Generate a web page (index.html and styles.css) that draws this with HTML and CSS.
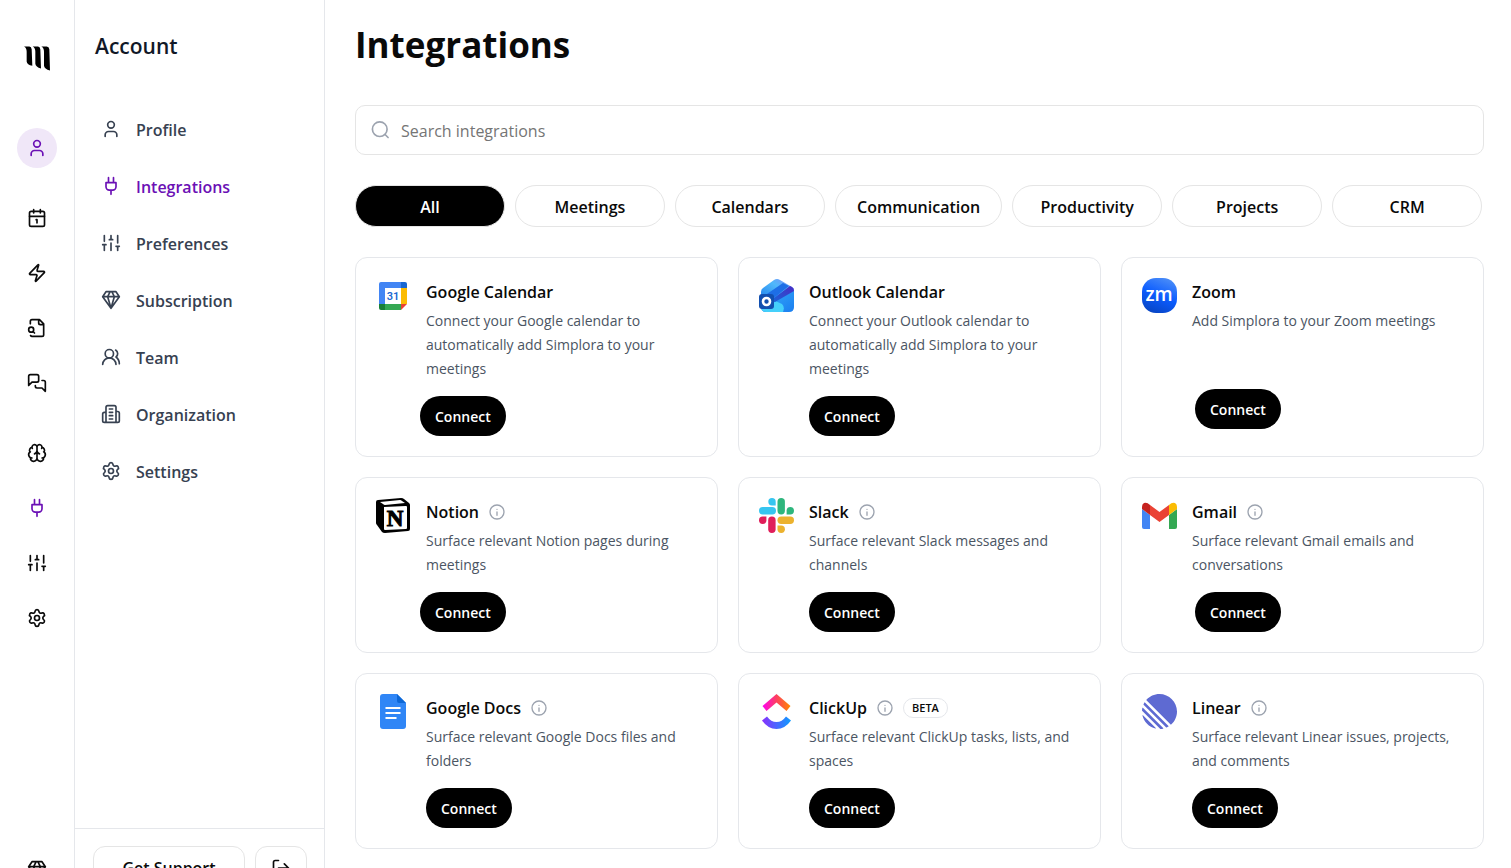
FILE: index.html
```html
<!DOCTYPE html>
<html lang="en">
<head>
<meta charset="utf-8">
<meta name="viewport" content="width=device-width, initial-scale=1">
<title>Integrations</title>
<link rel="stylesheet" href="styles.css">
</head>
<body>
<svg class="sprite" aria-hidden="true">
  <symbol id="i-user" viewBox="0 0 24 24"><path d="M19 21v-2a4 4 0 0 0-4-4H9a4 4 0 0 0-4 4v2"/><circle cx="12" cy="7" r="4"/></symbol>
  <symbol id="i-calendar" viewBox="0 0 24 24"><path d="M11 14h1v4M16 2v4M3 10h18M8 2v4"/><rect x="3" y="4" width="18" height="18" rx="2"/></symbol>
  <symbol id="i-zap" viewBox="0 0 24 24"><path d="M4 14a1 1 0 0 1-.78-1.63l9.9-10.2a.5.5 0 0 1 .86.46l-1.92 6.02A1 1 0 0 0 13 10h7a1 1 0 0 1 .78 1.63l-9.9 10.2a.5.5 0 0 1-.86-.46l1.92-6.02A1 1 0 0 0 11 14z"/></symbol>
  <symbol id="i-file" viewBox="0 0 24 24"><path d="M14 2v4a2 2 0 0 0 2 2h4M4.268 21a2 2 0 0 0 1.727 1H18a2 2 0 0 0 2-2V7l-5-5H6a2 2 0 0 0-2 2v3M9 18l-1.500-1.500"/><circle cx="5" cy="14" r="3"/></symbol>
  <symbol id="i-chat" viewBox="0 0 24 24"><path d="M14 9a2 2 0 0 1-2 2H6l-4 4V4a2 2 0 0 1 2-2h8a2 2 0 0 1 2 2zM18 9h2a2 2 0 0 1 2 2v11l-4-4h-6a2 2 0 0 1-2-2v-1"/></symbol>
  <symbol id="i-brain" viewBox="0 0 24 24"><path d="M12 18V5M15 13a4.170 4.170 0 0 1-3-4 4.170 4.170 0 0 1-3 4M17.598 6.500A3 3 0 1 0 12 5a3 3 0 1 0-5.598 1.500M17.997 5.125a4 4 0 0 1 2.526 5.770M18 18a4 4 0 0 0 2-7.464M19.967 17.483A4 4 0 1 1 12 18a4 4 0 1 1-7.967-.517M6 18a4 4 0 0 1-2-7.464M6.003 5.125a4 4 0 0 0-2.526 5.770"/></symbol>
  <symbol id="i-plug" viewBox="0 0 24 24"><path d="M12 22v-5M9 8V2M15 8V2M18 8v5a4 4 0 0 1-4 4h-4a4 4 0 0 1-4-4V8Z"/></symbol>
  <symbol id="i-sliders" viewBox="0 0 24 24"><path d="M4 21v-7M4 10V3M12 21v-9M12 8V3M20 21v-5M20 12V3M2 14h4M10 8h4M18 16h4"/></symbol>
  <symbol id="i-gear" viewBox="0 0 24 24"><path d="M9.671 4.136a2.340 2.340 0 0 1 4.659 0 2.340 2.340 0 0 0 3.319 1.915 2.340 2.340 0 0 1 2.330 4.033 2.340 2.340 0 0 0 0 3.831 2.340 2.340 0 0 1-2.330 4.033 2.340 2.340 0 0 0-3.319 1.915 2.340 2.340 0 0 1-4.659 0 2.340 2.340 0 0 0-3.320-1.915 2.340 2.340 0 0 1-2.330-4.033 2.340 2.340 0 0 0 0-3.831A2.340 2.340 0 0 1 6.350 6.051a2.340 2.340 0 0 0 3.319-1.915"/><circle cx="12" cy="12" r="3"/></symbol>
  <symbol id="i-gem" viewBox="0 0 24 24"><path d="M6 2h12l4 6-10 14L2 8ZM11 2 8 8l4 14 4-14-3-6M2 8h20"/></symbol>
  <symbol id="i-team" viewBox="0 0 24 24"><path d="M18 21a8 8 0 0 0-16 0M22 20c0-3.370-2-6.500-4-8a5 5 0 0 0-.450-8.300"/><circle cx="10" cy="8" r="5"/></symbol>
  <symbol id="i-building" viewBox="0 0 24 24"><path d="M6 22V4a2 2 0 0 1 2-2h8a2 2 0 0 1 2 2v18ZM6 10H4a2 2 0 0 0-2 2v8a2 2 0 0 0 2 2h2M18 9h2a2 2 0 0 1 2 2v9a2 2 0 0 1-2 2h-2M10 6h4M10 10h4M10 14h4M10 18h4"/></symbol>
  <symbol id="i-logout" viewBox="0 0 24 24"><path d="m16 17 5-5-5-5M21 12H9M9 21H5a2 2 0 0 1-2-2V5a2 2 0 0 1 2-2h4"/></symbol>
  <symbol id="i-search" viewBox="0 0 24 24"><circle cx="10.500" cy="11" r="8.800"/><path d="m20.500 21-3.600-3.600"/></symbol>
  <symbol id="i-info" viewBox="0 0 24 24"><circle cx="12" cy="12" r="10.500"/><path d="M12 17v-5M12 8v.010"/></symbol>
</svg>

<div class="shell">
  <nav class="rail" aria-label="Main">
    <a class="logo" href="#" aria-label="Home">
      <svg viewBox="0 0 78 74" width="26" height="25"><path d="M0 1H16Q22 2 23 9L25 59Q9 56 8 46V17Q8 5 0 1ZM26 1H42Q48 2 49 9L51 67Q35 63 34 53V17Q34 5 26 1ZM52 1H68Q75 2 76 9L78 73Q61 69 60 59V17Q60 5 52 1Z"/></svg>
    </a>
    <a class="rail-link rail-link--current" href="#" aria-label="Account"><svg class="icon"><use href="#i-user"/></svg></a>
    <div class="rail-group">
      <a class="rail-link" href="#" aria-label="Calendar"><svg class="icon"><use href="#i-calendar"/></svg></a>
      <a class="rail-link" href="#" aria-label="Automations"><svg class="icon"><use href="#i-zap"/></svg></a>
      <a class="rail-link" href="#" aria-label="Files"><svg class="icon"><use href="#i-file"/></svg></a>
      <a class="rail-link" href="#" aria-label="Chats"><svg class="icon"><use href="#i-chat"/></svg></a>
    </div>
    <div class="rail-group">
      <a class="rail-link" href="#" aria-label="Memory"><svg class="icon"><use href="#i-brain"/></svg></a>
      <a class="rail-link rail-link--accent" href="#" aria-label="Integrations"><svg class="icon"><use href="#i-plug"/></svg></a>
      <a class="rail-link" href="#" aria-label="Preferences"><svg class="icon"><use href="#i-sliders"/></svg></a>
      <a class="rail-link" href="#" aria-label="Settings"><svg class="icon"><use href="#i-gear"/></svg></a>
    </div>
    <a class="rail-link rail-link--last" href="#" aria-label="Upgrade"><svg class="icon"><use href="#i-gem"/></svg></a>
  </nav>

  <aside class="panel">
    <h2 class="panel-title">Account</h2>
    <nav class="menu" aria-label="Account">
      <a class="menu-link" href="#"><svg class="icon"><use href="#i-user"/></svg><span>Profile</span></a>
      <a class="menu-link menu-link--current" href="#" aria-current="page"><svg class="icon"><use href="#i-plug"/></svg><span>Integrations</span></a>
      <a class="menu-link" href="#"><svg class="icon"><use href="#i-sliders"/></svg><span>Preferences</span></a>
      <a class="menu-link" href="#"><svg class="icon"><use href="#i-gem"/></svg><span>Subscription</span></a>
      <a class="menu-link" href="#"><svg class="icon"><use href="#i-team"/></svg><span>Team</span></a>
      <a class="menu-link" href="#"><svg class="icon"><use href="#i-building"/></svg><span>Organization</span></a>
      <a class="menu-link" href="#"><svg class="icon"><use href="#i-gear"/></svg><span>Settings</span></a>
    </nav>
    <div class="panel-footer">
      <button class="support" type="button">Get Support</button>
      <button class="logout" type="button" aria-label="Log out"><svg class="icon"><use href="#i-logout"/></svg></button>
    </div>
  </aside>

  <main class="main">
    <h1 class="title">Integrations</h1>
    <label class="search">
      <svg class="icon" aria-hidden="true"><use href="#i-search"/></svg>
      <input class="search-input" type="search" placeholder="Search integrations" aria-label="Search integrations">
    </label>
    <div class="filters">
      <button class="filter filter--on" type="button">All</button>
      <button class="filter" type="button">Meetings</button>
      <button class="filter" type="button">Calendars</button>
      <button class="filter" type="button">Communication</button>
      <button class="filter" type="button">Productivity</button>
      <button class="filter" type="button">Projects</button>
      <button class="filter" type="button">CRM</button>
    </div>

    <div class="cards">
      <article class="card">
        <svg class="brand" viewBox="0 0 35 35">
          <path fill="#4285f4" d="M5 4h20v6H9v16H3V6q0-2 2-2Z"/><path fill="#1967d2" d="M25 4h4q2 0 2 2v4h-6Z"/><path fill="#fbbc04" d="M25 10h6v16h-6Z"/><path fill="#34a853" d="M9 26h16v6H9Z"/><path fill="#188038" d="M3 26h6v6H5q-2 0-2-2Z"/><path fill="#ea4335" d="M25 26h6l-6 6Z"/><path fill="#fff" d="M9 10h16v16H9Z"/>
          <text class="mark-31" x="17" y="22">31</text>
        </svg>
        <div class="card-body">
          <div class="card-head"><h3 class="card-title">Google Calendar</h3></div>
          <p class="card-text">Connect your Google calendar to automatically add Simplora to your meetings</p>
          <button class="connect connect--outset" type="button">Connect</button>
        </div>
      </article>

      <article class="card">
        <svg class="brand" viewBox="0 0 35 35">
          <defs>
            <linearGradient id="ol-a" x1="0" y1="1" x2="1" y2="0"><stop offset="0" stop-color="#1b7bea"/><stop offset=".6" stop-color="#4fb8fb"/><stop offset="1" stop-color="#8a84f5"/></linearGradient>
            <linearGradient id="ol-b" x1="0" y1="1" x2="1" y2="0"><stop offset="0" stop-color="#1667d8"/><stop offset="1" stop-color="#4a2bc4"/></linearGradient>
            <linearGradient id="ol-c" x1="0" y1="0" x2="1" y2="1"><stop offset="0" stop-color="#38b4fa"/><stop offset="1" stop-color="#1b7ef0"/></linearGradient>
          </defs>
          <path fill="url(#ol-c)" d="M35 12v17q0 5-5 5H7q-5 0-5-5V14l17-6Z"/>
          <path fill="#45d0fb" d="m12 21 11 5q3 3 1 8H7q-4 0-5-4Z"/>
          <path fill="url(#ol-a)" d="M2 14q0-3 2-4L15 2q3-2 6 0l12 7q2 1 2 3L14 25 2 18Z"/>
          <path fill="#1d6ee6" d="m5 18 19-13 6 3-19 15Z"/>
          <path fill="url(#ol-b)" d="m11 23 20-15 2 1q2 1 2 4L16 24Z"/>
          <rect fill="#1250b0" x="0" y="16" width="15" height="15" rx="3"/>
          <circle fill="none" stroke="#fff" stroke-width="2.600" cx="7.500" cy="23.500" r="3.500"/>
        </svg>
        <div class="card-body">
          <div class="card-head"><h3 class="card-title">Outlook Calendar</h3></div>
          <p class="card-text">Connect your Outlook calendar to automatically add Simplora to your meetings</p>
          <button class="connect" type="button">Connect</button>
        </div>
      </article>

      <article class="card">
        <svg class="brand" viewBox="0 0 35 35">
          <defs><linearGradient id="zm" x1=".3" y1="1" x2=".7" y2="0"><stop offset="0" stop-color="#0845c4"/><stop offset=".5" stop-color="#0b5cff"/><stop offset="1" stop-color="#4a8cf8"/></linearGradient></defs>
          <rect fill="url(#zm)" width="35" height="35" rx="14"/>
          <text class="mark-zm" x="17" y="23">zm</text>
        </svg>
        <div class="card-body">
          <div class="card-head"><h3 class="card-title">Zoom</h3></div>
          <p class="card-text">Add Simplora to your Zoom meetings</p>
          <button class="connect connect--inset connect--spaced" type="button">Connect</button>
        </div>
      </article>

      <article class="card">
        <svg class="brand" viewBox="0 0 35 35">
          <path d="M2 2 25 0q2 0 3 1l5 4q1 1 1 2v24q0 2-2 2L9 35q-2 0-3-1l-5-7q-1-1-1-2V4q0-2 2-2Z"/><path fill="#fff" d="M4 4 24 2q1 0 2 1l3 2L9 7Q8 7 7 6ZM8 9l22-1q1 0 1 1v21q0 1-1 1L9 32q-1 0-1-1V10Z"/>
          <text class="mark-n" x="19" y="28">N</text>
        </svg>
        <div class="card-body">
          <div class="card-head"><h3 class="card-title">Notion</h3><svg class="info"><use href="#i-info"/></svg></div>
          <p class="card-text">Surface relevant Notion pages during meetings</p>
          <button class="connect connect--outset" type="button">Connect</button>
        </div>
      </article>

      <article class="card">
        <svg class="brand" viewBox="0 0 35 35">
          <g fill="#36c5f0"><rect y="9" width="17" height="7.400" rx="3.700"/><path d="M13 0a3.700 3.700 0 0 1 3.700 3.700v3.700H13A3.700 3.700 0 0 1 13 0Z"/></g>
          <g fill="#2eb67d"><rect x="18.500" y="0" width="7.400" height="16.500" rx="3.700"/><path d="M35 12.800a3.700 3.700 0 0 1-3.700 3.700h-3.700v-3.700a3.700 3.700 0 0 1 7.400 0Z"/></g>
          <g fill="#ecb22e"><rect x="18.500" y="18.500" width="16.500" height="7.400" rx="3.700"/><path d="M22.200 35a3.700 3.700 0 0 1-3.700-3.700v-3.700h3.700a3.700 3.700 0 0 1 0 7.400Z"/></g>
          <g fill="#e01e5a"><rect x="9.200" y="18.500" width="7.400" height="16.500" rx="3.700"/><path d="M0 22.200a3.700 3.700 0 0 1 3.700-3.700h3.700v3.700a3.700 3.700 0 0 1-7.400 0Z"/></g>
        </svg>
        <div class="card-body">
          <div class="card-head"><h3 class="card-title">Slack</h3><svg class="info"><use href="#i-info"/></svg></div>
          <p class="card-text">Surface relevant Slack messages and channels</p>
          <button class="connect" type="button">Connect</button>
        </div>
      </article>

      <article class="card">
        <svg class="brand" viewBox="0 0 35 35">
          <path fill="#4285f4" d="M0 11 8 17v14H2q-2 0-2-2Z"/><path fill="#34a853" d="m35 11-8 6v14h6q2 0 2-2Z"/><path fill="#fbbc04" d="M27 7q3-3 6-2 2 1 2 4v2l-8 6Z"/><path fill="#ea4335" d="m8 7 9.500 7L27 7v10l-9.500 7L8 17Z"/><path fill="#c5221f" d="M8 7Q5 4 2 5 0 6 0 9v2l8 6Z"/>
        </svg>
        <div class="card-body">
          <div class="card-head"><h3 class="card-title">Gmail</h3><svg class="info"><use href="#i-info"/></svg></div>
          <p class="card-text">Surface relevant Gmail emails and conversations</p>
          <button class="connect connect--inset" type="button">Connect</button>
        </div>
      </article>

      <article class="card">
        <svg class="brand" viewBox="0 0 35 35">
          <path fill="#3086f6" d="M7 0h14l9 9v23q0 3-3 3H7q-3 0-3-3V3q0-3 3-3Z"/><path fill="#0c67d6" d="M21 0v7q0 2 2 2h7Z"/><path fill="none" stroke="#fff" stroke-width="2" d="M9.500 14h15M9.500 19h15M9.500 24h11"/>
        </svg>
        <div class="card-body">
          <div class="card-head"><h3 class="card-title">Google Docs</h3><svg class="info"><use href="#i-info"/></svg></div>
          <p class="card-text">Surface relevant Google Docs files and folders</p>
          <button class="connect" type="button">Connect</button>
        </div>
      </article>

      <article class="card">
        <svg class="brand" viewBox="0 0 35 35">
          <defs>
            <linearGradient id="cu-a"><stop offset="0" stop-color="#ff02f0"/><stop offset=".5" stop-color="#fd4060"/><stop offset="1" stop-color="#ff8a00"/></linearGradient>
            <linearGradient id="cu-b"><stop offset="0" stop-color="#8930fd"/><stop offset="1" stop-color="#0c9cff"/></linearGradient>
          </defs>
          <path fill="url(#cu-a)" d="M17.500 0 31.500 12 27.500 17l-10-8.500-10 8.500-4-5Z"/><path fill="url(#cu-b)" d="m3 26.500 5-4q4 5.500 9.500 5.500t9.500-5.500l5 4Q26 35 17.500 35T3 26.500Z"/>
        </svg>
        <div class="card-body">
          <div class="card-head"><h3 class="card-title">ClickUp</h3><svg class="info"><use href="#i-info"/></svg><span class="beta">BETA</span></div>
          <p class="card-text">Surface relevant ClickUp tasks, lists, and spaces</p>
          <button class="connect" type="button">Connect</button>
        </div>
      </article>

      <article class="card">
        <svg class="brand" viewBox="0 0 100 100">
          <path fill="#5e6ad2" d="M1.225 61.523c-.222-.949.908-1.546 1.597-.857l36.512 36.512c.690.690.092 1.820-.857 1.597-18.425-4.323-32.930-18.827-37.252-37.252ZM.002 46.889a.990.990 0 0 0 .290.760l52.060 52.060c.201.200.477.307.760.290 2.370-.149 4.695-.460 6.963-.927.764-.157 1.030-1.096.478-1.648L2.576 39.447c-.552-.552-1.491-.286-1.648.479a50.067 50.067 0 0 0-.926 6.963ZM4.210 29.705a.988.988 0 0 0 .208 1.100l64.776 64.776c.289.290.726.375 1.100.208a49.908 49.908 0 0 0 5.185-2.684.981.981 0 0 0 .183-1.540L8.436 24.336a.981.981 0 0 0-1.541.183 49.896 49.896 0 0 0-2.684 5.185ZM12.656 18.074a.986.986 0 0 1-.037-1.356C21.795 6.460 35.111 0 49.952 0 77.592 0 100 22.407 100 50.048c0 14.840-6.460 28.156-16.718 37.332a.986.986 0 0 1-1.356-.037L12.656 18.074Z"/>
        </svg>
        <div class="card-body">
          <div class="card-head"><h3 class="card-title">Linear</h3><svg class="info"><use href="#i-info"/></svg></div>
          <p class="card-text">Surface relevant Linear issues, projects, and comments</p>
          <button class="connect" type="button">Connect</button>
        </div>
      </article>
    </div>
  </main>
</div>
</body>
</html>
```
FILE: styles.css
```css
* {
  box-sizing: border-box;
}

body {
  margin: 0;
  height: 100vh;
  overflow: hidden;
  background: #fff;
  color: #0a0a0a;
  font-family: "Open Sans", "Noto Sans", sans-serif;
  font-size: 16px;
}

h1, h2, h3, p {
  margin: 0;
}

a {
  color: inherit;
  text-decoration: none;
}

button {
  font: inherit;
  color: inherit;
  cursor: pointer;
}

.sprite {
  display: none;
}

.icon {
  width: 20px;
  height: 20px;
  flex: none;
  fill: none;
  stroke: currentColor;
  stroke-width: 2;
  stroke-linecap: round;
  stroke-linejoin: round;
}

.shell {
  display: flex;
  min-height: calc(100vh + 40px);
}

/* Icon rail */
.rail {
  display: flex;
  flex-direction: column;
  align-items: center;
  gap: 30px;
  width: 75px;
  flex: none;
  padding: 46px 1px 18px 0;
  border-right: 1px solid #e5e7eb;
}

.logo {
  display: flex;
  margin-bottom: 27px;
}

.rail-group {
  display: flex;
  flex-direction: column;
  gap: 15px;
}

.rail-link {
  display: flex;
  align-items: center;
  justify-content: center;
  width: 40px;
  height: 40px;
  border-radius: 50%;
}

.rail-link--current {
  background: #f0e7f8;
  color: #6b10b5;
}

.rail-link--accent {
  color: #6b10b5;
}

.rail-link--last {
  margin-top: auto;
}

/* Account panel */
.panel {
  display: flex;
  flex-direction: column;
  width: 250px;
  flex: none;
  border-right: 1px solid #e5e7eb;
}

.panel-title {
  padding: 30px 20px 0;
  color: #111827;
  font-size: 21px;
  font-weight: 600;
  line-height: 32px;
}

.menu {
  display: flex;
  flex-direction: column;
  gap: 17px;
  padding: 48px 26px 0;
}

.menu-link {
  display: flex;
  align-items: center;
  gap: 15px;
  height: 40px;
  color: #374151;
  font-weight: 600;
}

.menu-link .icon {
  margin-bottom: 2px;
}

.menu-link--current {
  color: #6b10b5;
}

.panel-footer {
  display: flex;
  gap: 10px;
  margin-top: auto;
  padding: 17px 17px 18px 18px;
  border-top: 1px solid #e5e7eb;
}

.support,
.logout {
  display: flex;
  align-items: center;
  justify-content: center;
  height: 44px;
  padding: 0;
  border: 1px solid #e5e5e5;
  border-radius: 12px;
  background: #fff;
}

.support {
  flex: 1;
  font-weight: 600;
}

.logout {
  width: 52px;
}

/* Main column */
.main {
  flex: 1;
  min-width: 0;
  padding: 20px 27px 20px 30px;
}

.title {
  font-size: 35px;
  font-weight: 700;
  line-height: 50px;
}

.search {
  display: flex;
  align-items: center;
  gap: 10px;
  height: 50px;
  margin-top: 35px;
  padding: 0 15px;
  border: 1px solid #e5e5e5;
  border-radius: 10px;
  color: #9ca3af;
}

.search-input {
  flex: 1;
  min-width: 0;
  padding: 2px 0 0;
  border: 0;
  outline: 0;
  background: none;
  color: #0a0a0a;
  font: inherit;
}

.search-input::placeholder {
  color: #757575;
}

.filters {
  display: flex;
  flex-wrap: wrap;
  gap: 10px;
  margin-top: 30px;
}

.filter {
  min-width: 150px;
  height: 42px;
  padding: 2px 21px 0;
  border: 1px solid #e5e5e5;
  border-radius: 21px;
  background: #fff;
  font-weight: 600;
}

.filter--on {
  background: #000;
  color: #fff;
}

.cards {
  display: grid;
  grid-template-columns: repeat(3, minmax(0, 1fr));
  gap: 20px;
  margin-top: 30px;
}

.card {
  display: flex;
  gap: 15px;
  padding: 20px;
  border: 1px solid #e5e7eb;
  border-radius: 12px;
}

.brand {
  width: 35px;
  height: 35px;
  flex: none;
}

.mark-31,
.mark-zm,
.mark-n {
  text-anchor: middle;
}

.mark-31 {
  fill: #1a67d2;
  font: 600 11px Roboto, sans-serif;
}

.mark-zm {
  fill: #fff;
  font: 600 19px "Open Sans", sans-serif;
}

.mark-n {
  stroke: #000;
  font: 700 23px "Liberation Serif", serif;
}

.card-body {
  display: flex;
  flex-direction: column;
  align-items: flex-start;
  flex: 1;
  min-width: 0;
}

.card-head {
  display: flex;
  align-items: center;
  gap: 10px;
  height: 27px;
}

.card-title {
  font-size: 16px;
  font-weight: 600;
}

.info {
  width: 16px;
  height: 16px;
  overflow: visible;
  fill: none;
  stroke: #9ca3af;
  stroke-width: 2;
  stroke-linecap: round;
}

.beta {
  padding: 0 8px;
  border: 1px solid #e5e7eb;
  border-radius: 10px;
  font-size: 11px;
  font-weight: 600;
  line-height: 18px;
}

.card-text {
  margin-top: 4px;
  color: #4b5563;
  font-size: 14px;
  line-height: 24px;
}

.connect {
  height: 40px;
  margin-top: 15px;
  padding: 0 15px;
  border: 0;
  border-radius: 20px;
  background: #000;
  color: #fff;
  font-size: 14px;
  font-weight: 600;
}

.connect--outset {
  margin-left: -6px;
}

.connect--inset {
  margin-left: 3px;
}

.connect--spaced {
  margin-top: 56px;
}
```
